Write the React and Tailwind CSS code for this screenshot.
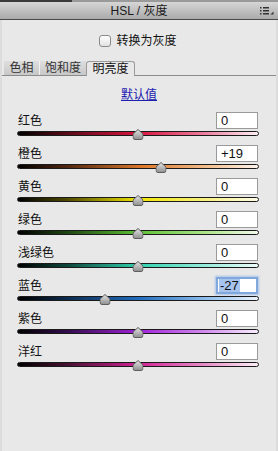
import React from "react";

const rows = [
	{ name: "红色", value: 0, grad: "bg-[linear-gradient(to_right,#000_0%,#5a0a18_20%,#d8143e_50%,#ec80a0_78%,#fdf0f4_100%)]" },
	{ name: "橙色", value: 19, grad: "bg-[linear-gradient(to_right,#000_0%,#4e2610_20%,#de7a2c_52%,#f2bc8c_78%,#fdf4ec_100%)]" },
	{ name: "黄色", value: 0, grad: "bg-[linear-gradient(to_right,#000_0%,#4e4800_20%,#f2e600_50%,#f7f080_78%,#fefce8_100%)]" },
	{ name: "绿色", value: 0, grad: "bg-[linear-gradient(to_right,#000_0%,#1e4412_20%,#5cc034_50%,#ace488_78%,#f2fbea_100%)]" },
	{ name: "浅绿色", value: 0, grad: "bg-[linear-gradient(to_right,#000_0%,#0e443a_20%,#30d0ae_50%,#94ecdc_78%,#eefdfa_100%)]" },
	{ name: "蓝色", value: -27, grad: "bg-[linear-gradient(to_right,#000_0%,#0c2a4c_20%,#206cbe_50%,#8cbcec_78%,#eef5fd_100%)]", active: true },
	{ name: "紫色", value: 0, grad: "bg-[linear-gradient(to_right,#000_0%,#320c4c_20%,#a020d8_50%,#d28cee_78%,#f8eefd_100%)]" },
	{ name: "洋红", value: 0, grad: "bg-[linear-gradient(to_right,#000_0%,#461030_20%,#d02294_50%,#e88ec8_78%,#fdeef7_100%)]" },
];

// little grey pointer that sits on the slider
const Thumb = () => (
	<svg width="11" height="11" viewBox="0 0 11 11">
		<defs>
			<linearGradient id="tg" x1="0" y1="0" x2="0" y2="1">
				<stop offset="0" stopColor="#e4e4e4" />
				<stop offset="1" stopColor="#8e8e8e" />
			</linearGradient>
		</defs>
		<path d="M5.5 0.5 L10.5 5 L10.5 8.5 Q10.5 10.5 8.5 10.5 L2.5 10.5 Q0.5 10.5 0.5 8.5 L0.5 5 Z" fill="url(#tg)" stroke="#5e5e5e" strokeWidth="1" />
	</svg>
);

const Row = ({ name, value, grad, active }) => {
	const text = value > 0 ? `+${value}` : `${value}`;

	return (
		<div className="flex flex-col h-[33px]">
			<div className="flex items-center justify-between h-[17px]">
				<span className="pl-[1px] text-[12px] text-[#111]">{name}</span>
				{active ? (
					<div className="w-[42px] h-[17px] bg-white border-2 border-[#80a8dc] shadow-[0_0_2px_1px_#a8c4ea] flex items-center pl-[1px] text-[13px] leading-none text-[#111]">
						<span className="bg-[#a6c4ee] px-[1px] h-[13px] flex items-center">{text}</span>
					</div>
				) : (
					<div className="w-[42px] h-[17px] bg-white border border-[#9a9a9a] flex items-center pl-[4px] text-[13px] leading-none text-[#111]">
						{text}
					</div>
				)}
			</div>
			<div className="relative mt-[2px] h-[5px] mr-[-1px]">
				<div className={`h-[5px] rounded-full border border-[#1a1a1a] ${grad}`} />
				<div className="absolute top-[-2px] -translate-x-1/2" style={{ left: `${50 + value / 2}%` }}>
					<Thumb />
				</div>
			</div>
		</div>
	);
};

export default function App() {
	return (
		<div className="w-[278px] h-[451px] flex flex-col bg-[#e8e8e8] font-['Liberation_Sans','Noto_Sans_CJK_SC',sans-serif] overflow-hidden">
			<div className="flex h-[2px]">
				<div className="w-[72px] bg-[#3a3a3a]" />
				<div className="flex-1 bg-[#9a9a9a]" />
			</div>
			<div className="relative h-[17px] flex items-center justify-center bg-[linear-gradient(to_bottom,#d6d6d6,#aaaaaa)] text-[12px] text-[#1a1a1a]">
				HSL / 灰度
				<svg className="absolute right-[4px] top-[5px]" width="14" height="8" viewBox="0 0 14 8">
					<rect x="0" y="0" width="1.5" height="1.5" fill="#333" />
					<rect x="0" y="3" width="1.5" height="1.5" fill="#333" />
					<rect x="0" y="6" width="1.5" height="1.5" fill="#333" />
					<rect x="3" y="0" width="6" height="1.5" fill="#333" />
					<rect x="3" y="3" width="6" height="1.5" fill="#333" />
					<rect x="3" y="6" width="6" height="1.5" fill="#333" />
					<path d="M10.5 7.5 L13.5 7.5 L13.5 4.5 Z" fill="#333" />
				</svg>
			</div>
			<div className="h-[1px] bg-[#4a4a4a]" />

			<div className="flex-1 flex flex-col border-x-2 border-[#dcdcdc]">
				<div className="flex items-center justify-center gap-[5px] mt-[14px] h-[13px] pr-[2px]">
					<div className="w-[12px] h-[12px] rounded-[3px] border border-[#8a8a8a] bg-[linear-gradient(to_bottom,#ffffff,#e2e2e2)]" />
					<span className="text-[12px] text-[#111]">转换为灰度</span>
				</div>

				<div className="flex items-end mt-[14px] h-[15px] border-b border-[#8c8c8c] text-[12px]">
					<div className="ml-[2px] w-[36px] h-[14px] flex items-center justify-center bg-[linear-gradient(to_bottom,#dedede,#c8c8c8)] border-r border-[#f2f2f2] text-[#333]">色相</div>
					<div className="w-[46px] h-[14px] flex items-center justify-center bg-[linear-gradient(to_bottom,#dedede,#c8c8c8)] text-[#333]">饱和度</div>
					<div className="w-[49px] h-[15px] mb-[-1px] flex items-center justify-center bg-[#e8e8e8] border border-b-0 border-[#9a9a9a] rounded-t-[3px] text-[#111]">明亮度</div>
				</div>

				<div className="flex justify-center mt-[10px] h-[16px]">
					<span className="text-[12px] text-[#2020b0] underline">默认值</span>
				</div>

				<div className="flex flex-col mt-[10px] pl-[15px] pr-[18px]">
					{rows.map((r) => (
						<Row key={r.name} {...r} />
					))}
				</div>
			</div>
		</div>
	);
}
